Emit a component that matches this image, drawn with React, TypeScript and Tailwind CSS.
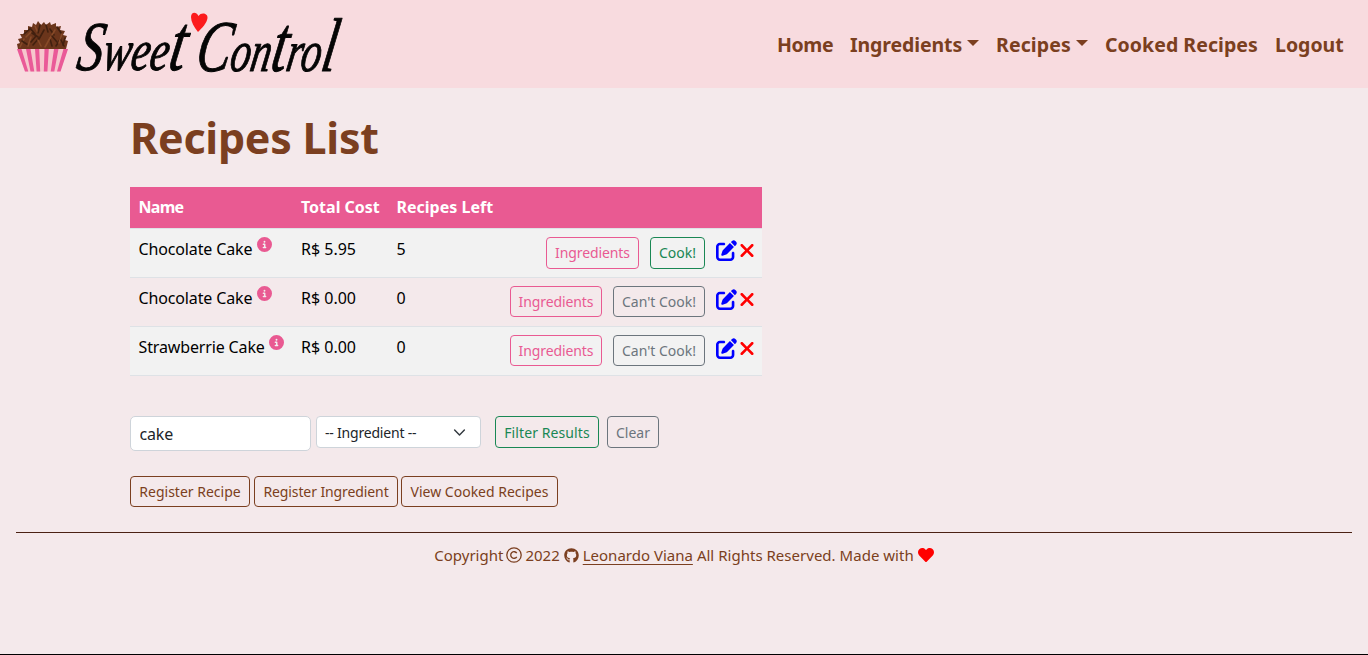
import { FaGithub, FaHeart } from "react-icons/fa";
import { FaPenToSquare, FaXmark, FaCircleInfo } from "react-icons/fa6";

const strands = [
  "M20 47l4-8", "M24 34l6-5", "M22 41l6 4", "M28 46l3-9", "M30 28l5 6", "M33 45l6-7", "M35 26l3 7", "M36 36l-5 6",
  "M40 25l-2 8", "M41 46l-3-6", "M44 30l-5 9", "M46 25l2 7", "M45 47l5-9", "M50 29l4 6", "M52 46l-2-7", "M55 30l-6 10",
  "M57 27l4 6", "M56 46l5-8", "M62 34l-3 9", "M64 46l-3-6", "M65 38l-2 7", "M26 37l5-5", "M32 33l6 4", "M52 36l5 6",
];

function Logo() {
  return (
    <svg width="364" height="88" viewBox="16 0 364 88" fill="none" aria-label="Sweet Control">
      <path
        d="M18 49L17 44L20 43L18 39L22 38L20 34L24 34L24 30L28 30L28 26L32 27L33 23L36 25L38 21L41 25L44 22L46 25L50 22L51 25L56 23L56 27L61 26L60 30L65 31L63 35L67 36L65 40L68 41L66 49Z"
        fill="#6b351b"
      />
      {strands.map((d, i) => (
        <path key={d} d={d} stroke={i % 3 ? "#41200f" : "#874a28"} strokeWidth="1.6" strokeLinecap="round" />
      ))}
      <path d="M17 49H68L60.5 71.5H25Z" fill="#f6c7cd" />
      <path
        d="M17 49h4.5l6.8 22.5H25ZM26 49h4.5l3.8 22.5h-3.8ZM35 49h4.2l1 22.5h-3.6ZM44.5 49h4.3l-1.4 22.5h-3.6ZM54 49h4.5l-4.2 22.5h-3.6ZM63.5 49H68l-7.5 22.5H57Z"
        fill="#ea5a98"
      />
      <g
        fontFamily="'Liberation Serif', serif"
        fontStyle="italic"
        fill="#050505"
        stroke="#050505"
        strokeWidth="1"
        strokeLinejoin="round"
      >
        <text transform="translate(75 70) skewX(-10)" textLength="108" lengthAdjust="spacingAndGlyphs">
          <tspan fontSize="70">S</tspan>
          <tspan fontSize="58">wee</tspan>
          <tspan fontSize="80">t</tspan>
        </text>
        <text transform="translate(194 71) skewX(-10)" textLength="140" lengthAdjust="spacingAndGlyphs">
          <tspan fontSize="73">C</tspan>
          <tspan fontSize="58">on</tspan>
          <tspan fontSize="80">t</tspan>
          <tspan fontSize="58">ro</tspan>
          <tspan fontSize="76">l</tspan>
        </text>
      </g>
      <path d="M198 32C194 27 191 22 191 17C191 12 196 11 198.500 16C201 12 208 13 207.500 18C207 23 202 28 198 32Z" fill="#fc1a1c" />
    </svg>
  );
}

const Caret = () => (
  <span className="ml-[5px] mt-[-5px] h-0 w-0 border-x-[6px] border-t-[6px] border-x-transparent border-t-[#7b3f20]" />
);

const btn = "flex shrink-0 items-center justify-center rounded-[4px] border text-[14px] whitespace-nowrap";

const rows = [
  { name: "Chocolate Cake", cost: "R$ 5.95", left: "5", can: true },
  { name: "Chocolate Cake", cost: "R$ 0.00", left: "0", can: false },
  { name: "Strawberrie Cake", cost: "R$ 0.00", left: "0", can: false },
];

export default function App() {
  return (
    <div className="flex h-[655px] flex-col border-b border-black bg-[#f4e9eb] font-['Noto_Sans',sans-serif] text-black">
      <header className="flex h-[88px] shrink-0 items-center justify-between bg-[#f8dbdf] pr-6 pl-4">
        <Logo />
        <nav className="flex items-center gap-[17px] pt-[2px] text-[19.5px] font-bold text-[#7b3f20]">
          <a className="w-[56px] whitespace-nowrap tracking-[-0.4px]">Home</a>
          <a className="flex w-[129px] items-center whitespace-nowrap tracking-[-0.1px]">Ingredients<Caret /></a>
          <a className="flex w-[92px] items-center whitespace-nowrap tracking-[0.1px]">Recipes<Caret /></a>
          <a className="w-[153px] whitespace-nowrap tracking-[0.050px]">Cooked Recipes</a>
          <a className="w-[69px] whitespace-nowrap">Logout</a>
        </nav>
      </header>

      <main className="ml-[130px] flex w-[632px] flex-col">
        <h1 className="mt-[22px] h-[77px] text-[43px] leading-[56px] font-bold tracking-[-0.25px] text-[#7b3f20]">Recipes List</h1>

        <div className="flex flex-col text-[16px]">
          <div className="flex h-[42px] items-center border-b border-[#dee2e6] bg-[#e95a92] pb-[2px] pl-[8.5px] font-bold text-white">
            <span className="w-[162.500px] tracking-[-0.7px]">Name</span>
            <span className="w-[95.500px]">Total Cost</span>
            <span>Recipes Left</span>
          </div>
          {rows.map((r, i) => (
            <div
              key={i}
              className={`flex h-[49px] border-b border-[#dee2e6] pt-2 pr-[5px] pl-[8.5px] leading-6 ${i % 2 ? "" : "bg-[#f2f2f2]"}`}
            >
              <span className="flex w-[162.500px] gap-[4.5px] tracking-[-0.14px]">
                {r.name}
                <FaCircleInfo className="size-[15px] text-[#e95a92]" />
              </span>
              <span className="w-[95.500px]">{r.cost}</span>
              <span>{r.left}</span>
              <span className="ml-auto flex">
                <button className={`${btn} mr-[11px] border-[#e95a92] tracking-[-0.1px] text-[#e95a92] ${r.can ? "h-8 w-[93px]" : "h-[31px] w-[92px]"}`}>Ingredients</button>
                {r.can ? (
                  <button className={`${btn} h-8 w-[55px] border-[#198754] text-[#198754]`}>Cook!</button>
                ) : (
                  <button className={`${btn} h-[31px] w-[92px] border-[#6c757d] text-[#6c757d]`}>Can't Cook!</button>
                )}
                <FaPenToSquare className="mt-[3px] ml-[11px] size-[21px] text-[#0000ff]" />
                <FaXmark className="mt-[3px] size-5 h-[21px] text-[#ff0000]" />
              </span>
            </div>
          ))}
        </div>

        <form className="mt-10 flex items-start">
          <input
            defaultValue="cake"
            className="h-[35px] w-[181px] rounded-[5px] border border-[#ced4da] bg-white px-[8.5px] text-[16px] tracking-[-0.15px] text-[#212529]"
          />
          <div className="ml-[5px] flex h-8 w-[165px] items-center justify-between rounded-[4px] border border-[#ced4da] bg-white pr-[14px] pl-2 text-[14px] text-[#212529]">
            <span className="tracking-[-0.2px]">-- Ingredient --</span>
            <svg width="13" height="13" viewBox="0 0 16 16" fill="none" stroke="#343a40" strokeWidth="1.800" strokeLinecap="round" strokeLinejoin="round">
              <path d="m2 5 6 6 6-6" />
            </svg>
          </div>
          <button type="button" className={`${btn} ml-[14px] h-8 w-[104px] border-[#198754] tracking-[0.1px] text-[#198754]`}>Filter Results</button>
          <button type="button" className={`${btn} ml-2 h-8 w-[52px] border-[#6c757d] text-[#6c757d]`}>Clear</button>
        </form>

        <div className="mt-[25px] flex text-[#7b3f20]">
          <button className={`${btn} h-[31px] w-[120px] border-[#7b3f20]`}>Register Recipe</button>
          <button className={`${btn} ml-1 h-[31px] w-[144px] border-[#7b3f20] tracking-[-0.1px]`}>Register Ingredient</button>
          <button className={`${btn} ml-[3px] h-[31px] w-[157px] border-[#7b3f20]`}>View Cooked Recipes</button>
        </div>
      </main>

      <footer className="mx-4 mt-[25px] flex justify-center border-t border-[#4a2113] pt-[10px] text-[15px] leading-6 text-[#7b3f20]">
        <span className="flex items-center whitespace-nowrap">
          <span>Copyright</span>
          <svg className="ml-[3px]" width="16" height="16" viewBox="0 0 16 16" fill="none" stroke="currentColor" strokeWidth="1.3">
            <circle cx="8" cy="8" r="7.2" />
            <path d="M10.800 6.200A3.300 3.300 0 1 0 10.800 9.800" />
          </svg>
          <span className="ml-[3px]">2022</span>
          <FaGithub className="ml-1 size-[15px]" />
          <a className="ml-1 underline underline-offset-[3px]">Leonardo Viana</a>
          <span className="ml-1 tracking-[0.020px]">All Rights Reserved. Made with</span>
          <FaHeart className="ml-1 size-4 text-[#ff0000]" />
        </span>
      </footer>
    </div>
  );
}
